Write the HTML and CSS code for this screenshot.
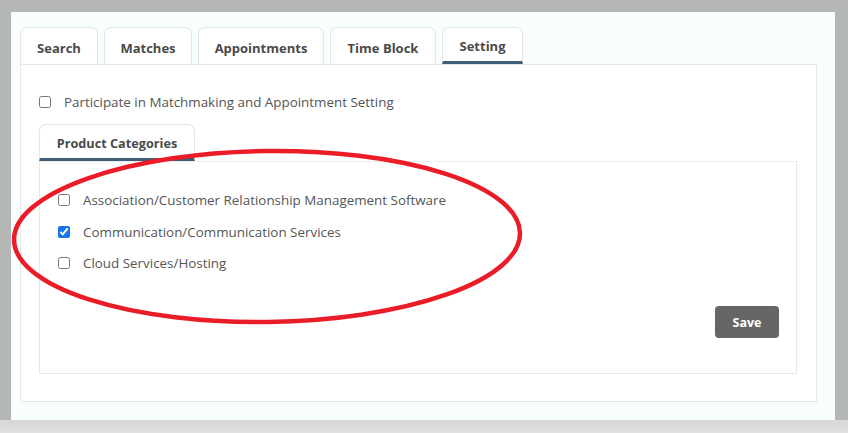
FILE: index.html
```html
<!DOCTYPE html>
<html>
<head>
<meta charset="utf-8">
<link rel="stylesheet" href="styles.css">
</head>
<body>
<div class="page">
  <div class="panel">
    <div class="tabs">
      <div class="tab t-search">Search</div>
      <div class="tab t-matches">Matches</div>
      <div class="tab t-appt">Appointments</div>
      <div class="tab t-time">Time Block</div>
      <div class="tab t-setting active">Setting</div>
    </div>
    <div class="tab-content">
      <label class="check-row top-check"><input type="checkbox"><span>Participate in Matchmaking and Appointment Setting</span></label>
      <div class="subtabs">
        <div class="subtab active">Product Categories</div>
      </div>
      <div class="sub-content">
        <label class="check-row"><input type="checkbox"><span>Association/Customer Relationship Management Software</span></label>
        <label class="check-row"><input type="checkbox" checked><span>Communication/Communication Services</span></label>
        <label class="check-row"><input type="checkbox"><span>Cloud Services/Hosting</span></label>
        <div class="actions"><button class="save">Save</button></div>
      </div>
    </div>
  </div>
  <div class="footer-strip"></div>
  <svg class="circle" width="848" height="433" viewBox="0 0 848 433">
    <ellipse cx="267" cy="236.5" rx="253" ry="85.5" fill="none" stroke="#ea1c28" stroke-width="4.5" transform="rotate(-0.8 267 236.5)"/>
  </svg>
</div>
</body>
</html>
```
FILE: styles.css
```css
* { box-sizing: border-box; }
html, body { margin: 0; padding: 0; }
body {
  background: #b5b7b6;
  font-family: "Open Sans", "Liberation Sans", sans-serif;
  width: 848px;
  height: 433px;
  overflow: hidden;
}
.page {
  position: relative;
  width: 848px;
  height: 433px;
  padding: 12px 0 0 11px;
}
.panel {
  width: 824px;
  height: 408px;
  background: #f8fefe;
  padding: 15px 18px 18px 9px;
  display: flex;
  flex-direction: column;
}
.footer-strip {
  position: absolute;
  left: 0;
  bottom: 0;
  width: 848px;
  height: 13px;
  background: linear-gradient(#d6d7d6, #e0e0e0);
}
.tabs {
  display: flex;
  gap: 6px;
  height: 37px;
}
.tab {
  height: 37px;
  border: 1px solid #e4e6e6;
  border-bottom: none;
  border-radius: 7px 7px 0 0;
  background: #fff;
  font-weight: 700;
  font-size: 13px;
  color: #4a4a4a;
  display: flex;
  align-items: center;
  justify-content: center;
  padding-top: 3px;
}
.t-search { width: 78px; }
.t-matches { width: 88px; }
.t-appt { width: 126px; }
.t-time { width: 106px; }
.t-setting { width: 81px; }
.tab.active {
  border-bottom: 3px solid #3f5d77;
}
.tab-content {
  flex: 1;
  background: #fff;
  border: 1px solid #e6e8e8;
  padding: 0 19px 27px 18px;
  display: flex;
  flex-direction: column;
}
.check-row {
  display: flex;
  align-items: center;
  font-size: 13.4px;
  color: #555;
  height: 20px;
}
.check-row input {
  margin: 0 13px 0 0;
  width: 12px;
  height: 12px;
  accent-color: #1a73e8;
}
.top-check {
  margin-top: 27px;
}
.subtabs {
  display: flex;
  margin-top: 12px;
}
.subtab {
  width: 156px;
  height: 37px;
  border: 1px solid #e4e6e6;
  border-bottom: 3px solid #3f5d77;
  border-radius: 7px 7px 0 0;
  font-weight: 700;
  font-size: 12.7px;
  color: #4a4a4a;
  display: flex;
  align-items: center;
  justify-content: center;
  padding-top: 2px;
}
.sub-content {
  flex: 1;
  border: 1px solid #e6e8e8;
  border-top: 1px solid #eceeee;
  padding: 28px 17px 35px 18px;
  display: flex;
  flex-direction: column;
  gap: 11.5px;
}
.actions {
  margin-top: auto;
  display: flex;
  justify-content: flex-end;
}
.save {
  width: 64px;
  height: 32px;
  background: #666;
  color: #fff;
  border: none;
  border-radius: 4px;
  font-family: "Open Sans", "Liberation Sans", sans-serif;
  font-weight: 700;
  font-size: 12.5px;
}
.circle {
  position: absolute;
  left: 0;
  top: 0;
  pointer-events: none;
}
```
